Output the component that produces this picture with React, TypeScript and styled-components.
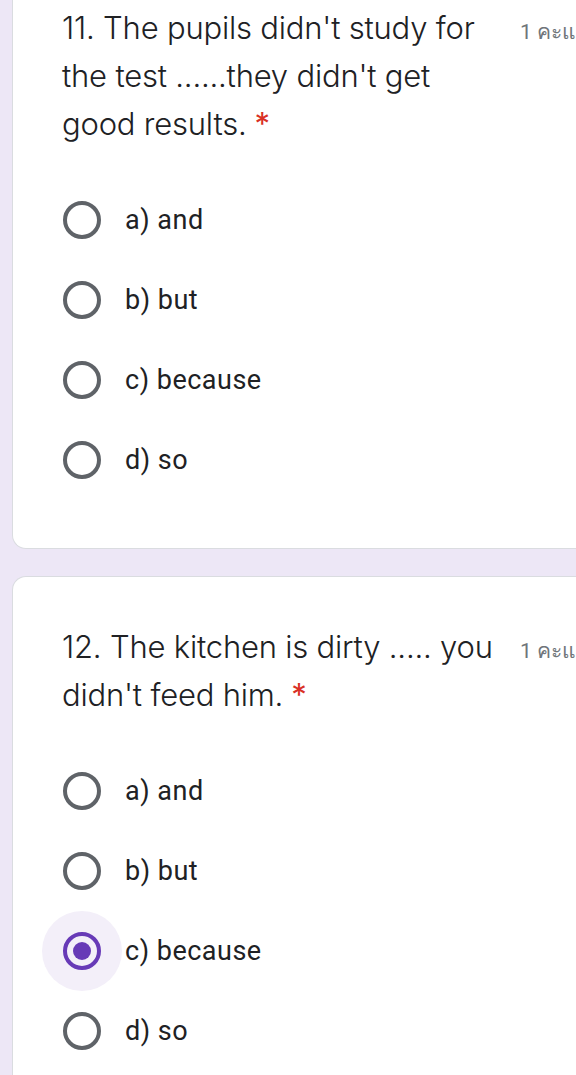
import styled, { createGlobalStyle } from "styled-components";

const GlobalStyle = createGlobalStyle`
  html, body {
    margin: 0;
    padding: 0;
    background: #ede7f6;
    overflow: hidden;
  }
  body {
    font-family: Roboto, "Liberation Sans", "Noto Sans", sans-serif;
    color: #202124;
  }
`;

const Page = styled.div`
  display: flex;
  flex-direction: column;
  gap: 27px;
  padding-left: 12px;
  width: 640px;
`;

const Card = styled.section<{ $cut?: boolean }>`
  background: #ffffff;
  border: 1px solid #dadce0;
  border-radius: ${(p) => (p.$cut ? "0 0 0 14px" : "14px 0 0 14px")};
  border-top-width: ${(p) => (p.$cut ? "0" : "1px")};
  border-right: none;
  padding: ${(p) => (p.$cut ? "4px" : "46px")} 0 48px 49px;
`;

const Header = styled.div`
  display: flex;
  align-items: flex-start;
  gap: 18px;
  margin-bottom: 32px;
`;

const Title = styled.div`
  width: 440px;
  font-family: Inter, Roboto, sans-serif;
  font-size: 31px;
  font-weight: 300;
  line-height: 48px;
  letter-spacing: -0.2px;
`;

const Required = styled.span`
  color: #d93025;
  font-weight: 400;
  margin-left: 8px;
`;

const Points = styled.div`
  padding-top: 4px;
  font-size: 21px;
  line-height: 48px;
  color: #70757a;
  white-space: nowrap;
`;

const Options = styled.div`
  display: flex;
  flex-direction: column;
`;

const Option = styled.label`
  display: flex;
  align-items: center;
  height: 80px;
  gap: 23px;
  font-size: 27px;
  letter-spacing: 0.5px;
`;

const RadioWrap = styled.div<{ $checked?: boolean }>`
  position: relative;
  width: 40px;
  height: 40px;
  display: flex;
  align-items: center;
  justify-content: center;
  &::before {
    content: "";
    position: absolute;
    left: -20px;
    top: -20px;
    width: 80px;
    height: 80px;
    border-radius: 50%;
    background: ${(p) => (p.$checked ? "#f3eff9" : "transparent")};
  }
`;

const Radio = styled.span<{ $checked?: boolean }>`
  position: relative;
  box-sizing: border-box;
  width: 38px;
  height: 38px;
  border-radius: 50%;
  border: 4px solid ${(p) => (p.$checked ? "#673ab7" : "#5f6368")};
  display: flex;
  align-items: center;
  justify-content: center;
  &::after {
    content: "";
    width: 18px;
    height: 18px;
    border-radius: 50%;
    background: ${(p) => (p.$checked ? "#673ab7" : "transparent")};
  }
`;

interface IQuestion {
  title: string;
  options: string[];
  checked?: number;
  cut?: boolean;
}

const questions: IQuestion[] = [
  {
    title: "11. The pupils didn't study for the test ......they didn't get good results.",
    options: ["a) and", "b) but", "c) because", "d) so"],
    cut: true,
  },
  {
    title: "12. The kitchen is dirty ..... you didn't feed him.",
    options: ["a) and", "b) but", "c) because", "d) so"],
    checked: 2,
  },
];

function App() {
  return (
    <>
      <GlobalStyle />
      <Page>
        {questions.map((q) => (
          <Card key={q.title} $cut={q.cut}>
            <Header>
              <Title>
                {q.title}
                <Required>*</Required>
              </Title>
              <Points>1 คะแนน</Points>
            </Header>
            <Options>
              {q.options.map((opt, i) => (
                <Option key={opt}>
                  <RadioWrap $checked={q.checked === i}>
                    <Radio $checked={q.checked === i} />
                  </RadioWrap>
                  {opt}
                </Option>
              ))}
            </Options>
          </Card>
        ))}
      </Page>
    </>
  );
}

export default App;
